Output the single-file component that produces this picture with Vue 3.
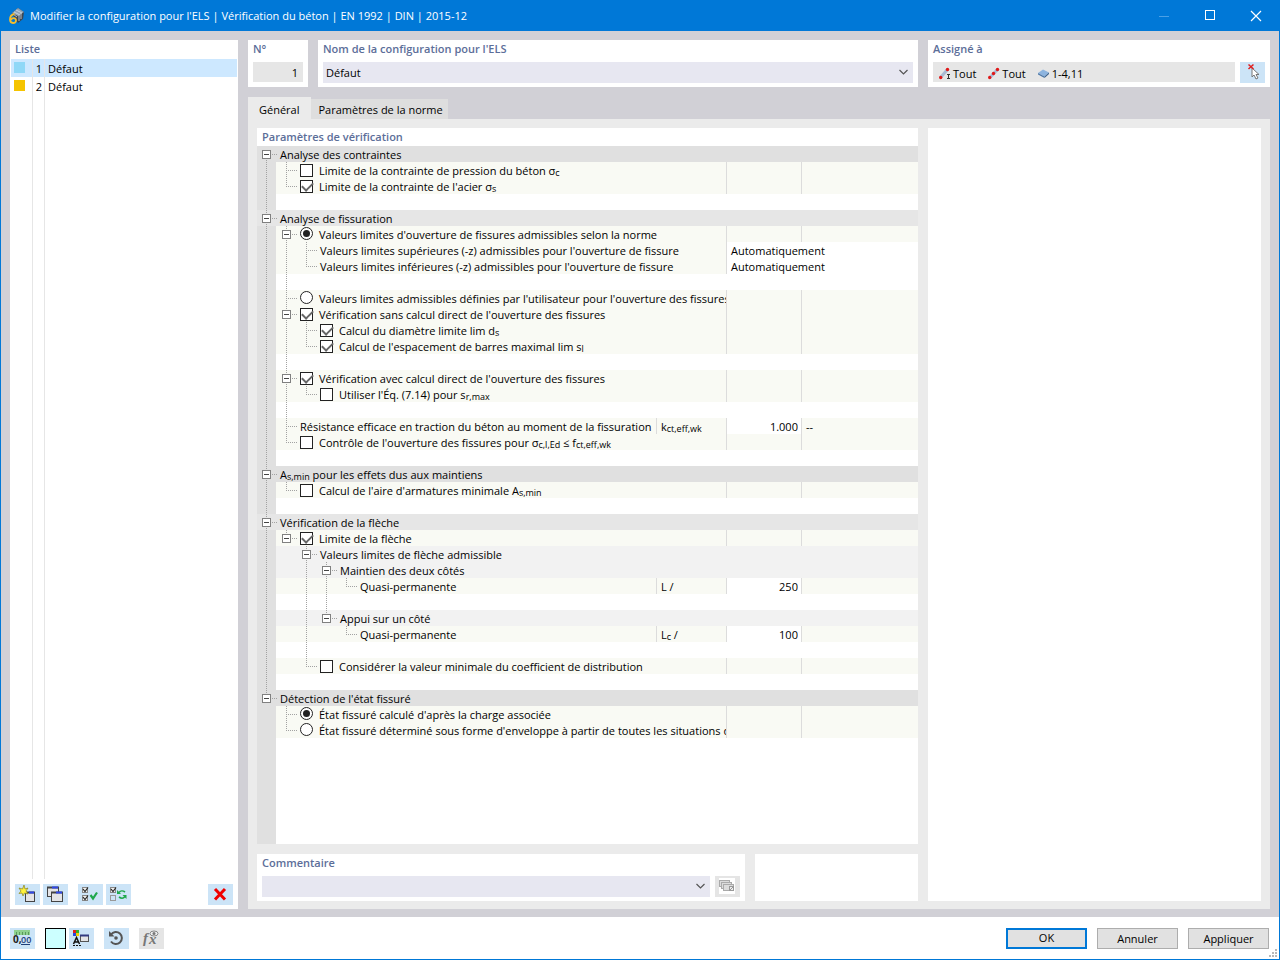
<script setup>
import { reactive, ref } from 'vue'

const configs = [
  { id: 1, name: 'Défaut', color: '#8fd8f7' },
  { id: 2, name: 'Défaut', color: '#f5c400' },
]
const selected = ref(1)
const configName = ref('Défaut')
const comment = ref('')
const tab = ref('general')

/*
 * Guide codes, one per tree level:
 *   .  empty        |  line          t  branch       l  last branch
 *   f  first box    b  middle box    e  last box
 */
const rows = reactive([
  { g: 'f', kind: 'head', text: 'Analyse des contraintes' },
  { g: '|t', check: false, text: 'Limite de la contrainte de pression du béton σ<sub>c</sub>' },
  { g: '|l', check: true, text: "Limite de la contrainte de l'acier σ<sub>s</sub>" },
  { g: '|', kind: 'blank' },
  { g: 'b', kind: 'head light', text: 'Analyse de fissuration' },
  { g: '|b', radio: 'limit', on: true, text: "Valeurs limites d'ouverture de fissures admissibles selon la norme" },
  { g: '||t', text: "Valeurs limites supérieures (-z) admissibles pour l'ouverture de fissure", wide: 'Automatiquement' },
  { g: '||l', text: "Valeurs limites inférieures (-z) admissibles pour l'ouverture de fissure", wide: 'Automatiquement' },
  { g: '||', kind: 'blank' },
  { g: '|t', radio: 'limit', text: "Valeurs limites admissibles définies par l'utilisateur pour l'ouverture des fissures" },
  { g: '|b', check: true, text: "Vérification sans calcul direct de l'ouverture des fissures" },
  { g: '||t', check: true, text: 'Calcul du diamètre limite lim d<sub>s</sub>' },
  { g: '||l', check: true, text: "Calcul de l'espacement de barres maximal lim s<sub>l</sub>" },
  { g: '||', kind: 'blank' },
  { g: '|b', check: true, text: "Vérification avec calcul direct de l'ouverture des fissures" },
  { g: '||l', check: false, text: "Utiliser l'Éq. (7.14) pour s<sub>r,max</sub>" },
  { g: '||', kind: 'blank' },
  { g: '|t', text: 'Résistance efficace en traction du béton au moment de la fissuration', symbol: 'k<sub>ct,eff,wk</sub>', value: '1.000', unit: '--' },
  { g: '|l', check: false, text: "Contrôle de l'ouverture des fissures pour σ<sub>c,l,Ed</sub> ≤ f<sub>ct,eff,wk</sub>" },
  { g: '|', kind: 'blank' },
  { g: 'b', kind: 'head', text: 'A<sub>s,min</sub> pour les effets dus aux maintiens' },
  { g: '|l', check: false, text: "Calcul de l'aire d'armatures minimale A<sub>s,min</sub>" },
  { g: '|', kind: 'blank' },
  { g: 'b', kind: 'head light', text: 'Vérification de la flèche' },
  { g: '|e', check: true, text: 'Limite de la flèche' },
  { g: '|.b', kind: 'sub', text: 'Valeurs limites de flèche admissible' },
  { g: '|.|b', kind: 'sub', text: 'Maintien des deux côtés' },
  { g: '|.||l', text: 'Quasi-permanente', symbol: 'L /', value: '250' },
  { g: '|.||', kind: 'blank' },
  { g: '|.|e', kind: 'sub', text: 'Appui sur un côté' },
  { g: '|.|.l', text: 'Quasi-permanente', symbol: 'L<sub>c</sub> /', value: '100' },
  { g: '|.|', kind: 'blank' },
  { g: '|.l', check: false, text: 'Considérer la valeur minimale du coefficient de distribution' },
  { g: '|', kind: 'blank' },
  { g: 'e', kind: 'head', text: "Détection de l'état fissuré" },
  { g: '.t', radio: 'state', on: true, text: "État fissuré calculé d'après la charge associée" },
  { g: '.l', radio: 'state', text: "État fissuré déterminé sous forme d'enveloppe à partir de toutes les situations de projet" },
])

const paths = {
  '|': 'M9.5 0V16',
  t: 'M9.5 0V16M11 8.5H20',
  l: 'M9.5 0V9M11 8.5H20',
  f: 'M9.5 14V16M15 8.5H20',
  b: 'M9.5 0V3M9.5 14V16M15 8.5H20',
  e: 'M9.5 0V3M15 8.5H20',
  '.': '',
}
const isBox = (c) => 'fbe'.includes(c)
const plain = (s) => (s || '').replace(/<[^>]+>/g, '')
</script>

<template>
  <div class="window">
    <header class="titlebar">
      <svg class="app-icon" width="16" height="16" viewBox="0 0 16 16">
        <path d="M3 5L9 0L15 4L14 11L9 15L5 9Z" fill="#3c4652" />
        <path d="M3 5L9 0L15 4L9 8Z" fill="#8fa3b5" />
        <path d="M5 4L11 7M7 2L13 5M4 6L8 9M12 5L12 11M10 7V13" stroke="#d3dce5" stroke-width="0.8" />
        <path d="M5.500 6C2 6.500 1 9 1 11.500C1 16 7 16 7 12.500C7 9.500 3 9.500 2 12" fill="none" stroke="#f4bd2e" stroke-width="1.800" />
      </svg>
      <h1>Modifier la configuration pour l'ELS | Vérification du béton | EN 1992 | DIN | 2015-12</h1>
      <button class="win" aria-label="Réduire" disabled>
        <svg width="12" height="12" viewBox="0 0 12 12"><path d="M1 6.500H11" stroke="#4aa0e6" /></svg>
      </button>
      <button class="win" aria-label="Agrandir">
        <svg width="12" height="12" viewBox="0 0 12 12"><rect x="1.500" y="0.500" width="9" height="9" fill="none" stroke="#fff" /></svg>
      </button>
      <button class="win" aria-label="Fermer">
        <svg width="12" height="12" viewBox="0 0 12 12"><path d="M1 1L11 11M11 1L1 11" stroke="#fff" stroke-width="1.200" /></svg>
      </button>
    </header>

    <div class="body">
      <aside class="panel list-panel">
        <h2>Liste</h2>
        <ul class="configs">
          <li v-for="c in configs" :key="c.id" :class="{ selected: c.id === selected }" @click="selected = c.id">
            <i class="swatch" :style="{ background: c.color }"></i>
            <span class="num">{{ c.id }}</span>
            <span>{{ c.name }}</span>
          </li>
        </ul>
        <div class="list-tools">
          <button class="tool" aria-label="Nouveau">
            <svg width="25" height="21" viewBox="0 0 25 21">
              <rect x="10.500" y="8.500" width="9" height="9" fill="#e4e4e6" stroke="#444" />
              <path d="M10 8.500H20" stroke="#444" stroke-width="2" />
              <path d="M14 8.500H19" stroke="#3048e8" stroke-width="2" />
              <path d="M9 1L10 5L13 4L11 7L13 10L9.500 9L8 12L7 9L4 9.500L6 7L4 4L7.500 5Z" fill="#fff23a" stroke="#8a8420" stroke-width="0.700" />
            </svg>
          </button>
          <button class="tool" aria-label="Copier">
            <svg width="25" height="21" viewBox="0 0 25 21">
              <rect x="4.500" y="3.500" width="11" height="9" fill="#e4e4e6" stroke="#444" />
              <path d="M4 3.500H16" stroke="#444" stroke-width="2" />
              <path d="M9 3.500H15" stroke="#3048e8" stroke-width="2" />
              <rect x="8.500" y="8.500" width="11" height="9" fill="#e4e4e6" stroke="#444" />
              <path d="M8 8.500H20" stroke="#444" stroke-width="2" />
              <path d="M13 8.500H19" stroke="#3048e8" stroke-width="2" />
            </svg>
          </button>
          <button class="tool spaced" aria-label="Tout sélectionner">
            <svg width="25" height="21" viewBox="0 0 25 21" fill="none">
              <rect x="4.500" y="3.500" width="5" height="5" fill="#eee" stroke="#888" />
              <rect x="4.500" y="11.500" width="5" height="5" fill="#eee" stroke="#888" />
              <path d="M5 5L7 7.500L10 3.500M5 13L7 15.500L10 11.500" stroke="#222" stroke-width="1.200" />
              <path d="M12.500 11L15 14.500L19 8.500" stroke="#1ea84c" stroke-width="2.200" />
            </svg>
          </button>
          <button class="tool" aria-label="Inverser la sélection">
            <svg width="25" height="21" viewBox="0 0 25 21" fill="none">
              <rect x="4.500" y="3.500" width="5" height="5" fill="#eee" stroke="#888" />
              <rect x="4.500" y="11.500" width="5" height="5" stroke="#999" />
              <path d="M5 5L7 7.500L10 3.500" stroke="#222" stroke-width="1.200" />
              <path d="M13 8.500C14.500 6.500 17 6.500 19 8M19 12.500C17.500 14.500 15 14.500 13 13" stroke="#1ea84c" stroke-width="1.600" />
              <path d="M11 6V10H15ZM20.500 15V11H16.500Z" fill="#1ea84c" />
            </svg>
          </button>
          <button class="tool end" aria-label="Supprimer">
            <svg width="25" height="21" viewBox="0 0 25 21"><path d="M7 5L17 15.500M17 5L7 15.500" stroke="#f00000" stroke-width="3" /></svg>
          </button>
        </div>
      </aside>

      <main class="content">
        <div class="top">
          <section class="panel field-panel number">
            <h2><label for="num">N°</label></h2>
            <input id="num" class="readonly" value="1" readonly />
          </section>
          <section class="panel field-panel name">
            <h2><label for="name">Nom de la configuration pour l'ELS</label></h2>
            <div class="combo">
              <select id="name" v-model="configName"><option>Défaut</option></select>
              <svg class="chevron" width="11" height="7" viewBox="0 0 11 7"><path d="M1.500 1L5.500 5L9.500 1" fill="none" stroke="#555" stroke-width="1.200" /></svg>
            </div>
          </section>
          <section class="panel field-panel assigned">
            <h2>Assigné à</h2>
            <div class="line">
              <div class="assign-box">
                <span class="assign">
                  <svg width="14" height="14" viewBox="0 0 14 14">
                    <path d="M1.500 10.500L8.500 2.500" stroke="#a9b9d2" stroke-width="3" />
                    <circle cx="1.700" cy="10.500" r="1.700" fill="#e01818" /><circle cx="8.500" cy="2.500" r="1.700" fill="#e01818" />
                    <path d="M8 7.500H11M9.500 7.500V11.500M8 11.500H11" stroke="#333" />
                  </svg>Tout
                </span>
                <span class="assign">
                  <svg width="14" height="14" viewBox="0 0 14 14">
                    <path d="M2 10.500L9.500 2.500" stroke="#a9b9d2" stroke-width="3" />
                    <circle cx="1.700" cy="10.500" r="1.700" fill="#e01818" /><circle cx="5.500" cy="6.500" r="1.700" fill="#e01818" /><circle cx="9.500" cy="2.500" r="1.700" fill="#e01818" />
                  </svg>Tout
                </span>
                <span class="assign">
                  <svg width="14" height="14" viewBox="0 0 14 14">
                    <path d="M0 6L5 2.500L11 5.500L6.500 9.500Z" fill="#8db4df" />
                    <path d="M0 6L6.500 9.500V11L0 7.500Z" fill="#4f79a8" /><path d="M6.500 9.500L11 5.500V7L6.500 11Z" fill="#3c618d" />
                  </svg>1-4,11
                </span>
              </div>
              <button class="tool" aria-label="Sélectionner dans le graphique">
                <svg width="25" height="21" viewBox="0 0 25 21">
                  <path d="M12 6L12 15L14 13L16 17L18 16L16 12.500H19Z" fill="#fff" stroke="#777" />
                  <path d="M8.500 2.500L13.500 7M13.500 2.500L8.500 7" stroke="#e02020" stroke-width="1.500" />
                </svg>
              </button>
            </div>
          </section>
        </div>

        <div class="tabs" role="tablist">
          <button role="tab" :class="{ active: tab === 'general' }" :aria-selected="tab === 'general'" @click="tab = 'general'">Général</button>
          <button role="tab" :class="{ active: tab === 'norm' }" :aria-selected="tab === 'norm'" @click="tab = 'norm'">Paramètres de la norme</button>
        </div>

        <div class="page">
          <div class="left">
            <section class="panel params">
              <h2>Paramètres de vérification</h2>
              <div class="tree">
                <table>
                  <colgroup><col /><col class="c-symbol" /><col class="c-value" /><col class="c-unit" /></colgroup>
                  <tbody>
                    <tr v-for="(r, i) in rows" :key="i" :class="r.kind || 'item'">
                      <td class="name-cell" :colspan="r.kind ? 4 : r.symbol ? 1 : 2">
                        <div class="node">
                          <svg v-for="(c, k) in r.g" :key="k" class="guide" width="20" height="16" viewBox="0 0 20 16">
                            <path :d="paths[c]" fill="none" stroke="#a2a2a2" stroke-dasharray="1 1" />
                            <template v-if="isBox(c)">
                              <rect x="5.500" y="4.500" width="8" height="8" fill="#fff" stroke="#808080" />
                              <path d="M7 8.500H12" stroke="#444" />
                            </template>
                          </svg>
                          <label v-if="r.check !== undefined" class="option">
                            <input type="checkbox" v-model="r.check" /><span v-html="r.text"></span>
                          </label>
                          <label v-else-if="r.radio" class="option">
                            <input type="radio" :name="r.radio" :checked="r.on" /><span v-html="r.text"></span>
                          </label>
                          <span v-else class="caption" v-html="r.text"></span>
                        </div>
                      </td>
                      <template v-if="!r.kind">
                        <td v-if="r.symbol" class="cell" v-html="r.symbol"></td>
                        <td v-if="r.wide" class="cell edit" colspan="2">{{ r.wide }}</td>
                        <template v-else>
                          <td class="cell" :class="{ edit: r.value }">
                            <input v-if="r.value" v-model="r.value" class="value" :aria-label="plain(r.symbol)" />
                          </td>
                          <td class="cell">{{ r.unit }}</td>
                        </template>
                      </template>
                    </tr>
                  </tbody>
                </table>
              </div>
            </section>
            <div class="bottom">
              <section class="panel field-panel comment">
                <h2><label for="comment">Commentaire</label></h2>
                <div class="line">
                  <div class="combo">
                    <select id="comment" v-model="comment"><option value=""></option></select>
                    <svg class="chevron" width="11" height="7" viewBox="0 0 11 7"><path d="M1.500 1L5.500 5L9.500 1" fill="none" stroke="#555" stroke-width="1.200" /></svg>
                  </div>
                  <button class="tool off" aria-label="Bibliothèque de commentaires" disabled>
                    <svg width="25" height="21" viewBox="0 0 25 21">
                      <rect x="4" y="2" width="16" height="16" fill="#fff" />
                      <g fill="#dcdcdc" stroke="#aaa"><rect x="4.500" y="4.500" width="10" height="6" /><rect x="6.500" y="6.500" width="10" height="6" /><rect x="8.500" y="8.500" width="10" height="6" /></g>
                      <rect x="14.500" y="10.500" width="4" height="4" fill="#eee" stroke="#999" /><path d="M15 14L18 11" stroke="#999" />
                    </svg>
                  </button>
                </div>
              </section>
              <section class="panel extra"></section>
            </div>
          </div>
          <section class="panel preview"></section>
        </div>
      </main>
    </div>

    <footer class="footer">
      <button class="tool" aria-label="Unités et décimales">
        <svg width="25" height="21" viewBox="0 0 25 21">
          <rect x="4" y="2" width="16" height="5" fill="#8fd18f" />
          <path d="M6.500 4V7M9.500 4V7M12.500 4V7M15.500 4V7M18.500 4V7" stroke="#5a9a5a" />
          <text x="3" y="15" font-size="10" font-weight="700" fill="#222">0,</text>
          <text x="11" y="15" font-size="9" font-weight="600" fill="#1f3f7a">00</text>
          <path d="M11 16.500H20" stroke="#1f3f7a" />
        </svg>
      </button>
      <button class="color" aria-label="Couleur"></button>
      <button class="tool" aria-label="Affichage">
        <svg width="25" height="21" viewBox="0 0 25 21">
          <rect x="4" y="2" width="3" height="3" fill="#e02020" /><rect x="7" y="2" width="3" height="3" fill="#2fb02f" />
          <rect x="4" y="5" width="3" height="3" fill="#2848e0" /><rect x="7" y="5" width="3" height="3" fill="#f0d000" />
          <path d="M4.500 16L7.500 9.500L10.500 16M5.500 14H9.500" fill="none" stroke="#111" stroke-width="1.500" />
          <path d="M4 17.500H12" stroke="#111" stroke-dasharray="2 1" />
          <rect x="11.500" y="7.500" width="8" height="6" fill="#e4e4e6" stroke="#555" />
          <path d="M11 7.500H20" stroke="#333a80" stroke-width="2" />
        </svg>
      </button>
      <button class="tool gap" aria-label="Rétablir">
        <svg width="25" height="21" viewBox="0 0 25 21" fill="none">
          <path d="M7 6.500A6 6 0 1 1 7 13.500" stroke="#555" stroke-width="2" />
          <path d="M5 3V8.500H10.500Z" fill="#555" /><circle cx="12" cy="10" r="1.800" fill="#555" />
        </svg>
      </button>
      <button class="tool off gap" aria-label="Formule" disabled>
        <svg width="25" height="21" viewBox="0 0 25 21">
          <text x="4" y="15" class="fx">f</text><text x="10" y="16" class="fx">x</text>
          <ellipse cx="15" cy="5.500" rx="4" ry="2.500" fill="#eee" stroke="#888" /><circle cx="15" cy="5.500" r="1.500" fill="#777" />
        </svg>
      </button>
      <div class="actions">
        <button class="ok">OK</button>
        <button>Annuler</button>
        <button>Appliquer</button>
      </div>
      <svg class="grip" width="8" height="8" viewBox="0 0 8 8" fill="#b8b8b8">
        <path d="M6 0h2v2h-2zM3 3h2v2h-2zM6 3h2v2h-2zM0 6h2v2h-2zM3 6h2v2h-2zM6 6h2v2h-2z" />
      </svg>
    </footer>
  </div>
</template>

<style>
body {
  margin: 0;
}
</style>

<style scoped>
.window {
  --label: #5c6e99;
  display: flex;
  flex-direction: column;
  box-sizing: border-box;
  min-height: 100vh;
  border: 1px solid #0078d7;
  background: #d1d0d6;
  color: #000;
  font: 11px/16px "Open Sans", "Noto Sans", sans-serif;
}
.window * {
  box-sizing: border-box;
}
button,
input,
select {
  margin: 0;
  padding: 0;
  border: 0;
  border-radius: 0;
  color: inherit;
  font: inherit;
}
svg {
  display: block;
  flex: none;
}
h1,
h2 {
  margin: 0;
}

.titlebar {
  display: flex;
  align-items: center;
  height: 30px;
  padding-left: 8px;
  background: #0078d7;
  color: #fff;
}
h1 {
  flex: 1;
  margin-left: 5px;
  font-size: 11px;
  font-weight: 400;
}
.win {
  display: flex;
  align-items: center;
  justify-content: center;
  width: 46px;
  height: 30px;
  background: none;
}

.body {
  flex: 1;
  display: flex;
  gap: 10px;
  padding: 9px 9px 8px;
}
.panel {
  background: #fff;
}
h2 {
  color: var(--label);
  font-size: 11px;
  line-height: 18px;
  font-weight: 600;
  padding-left: 5px;
}
.list-panel {
  display: flex;
  flex-direction: column;
  width: 228px;
}
.configs {
  --rules: linear-gradient(#e6e6e6, #e6e6e6) 21px 0 / 1px 100% no-repeat,
    linear-gradient(#e6e6e6, #e6e6e6) 33px 0 / 1px 100% no-repeat;
  flex: 1;
  margin: 1px 1px 5px;
  padding: 0;
  list-style: none;
  background: var(--rules);
}
.configs li {
  display: grid;
  grid-template-columns: 21px 10px 1fr;
  height: 18px;
  padding-top: 2px;
}
.configs li.selected {
  background: var(--rules), #cde8ff;
}
.swatch {
  width: 11px;
  height: 11px;
  margin: 1px 0 0 3px;
}
.num {
  text-align: right;
}
.num + span {
  padding-left: 6px;
}
.list-tools {
  display: flex;
  gap: 3px;
  padding: 0 5px 4px;
}
.tool {
  width: 25px;
  height: 21px;
  flex: none;
  background: #cce4f7;
}
.tool.off {
  background: #e5e5e5;
}
.tool.spaced {
  margin-left: 7px;
}
.tool.end {
  margin-left: auto;
}

.content {
  flex: 1;
  display: flex;
  flex-direction: column;
  min-width: 0;
}
.top {
  display: flex;
  gap: 10px;
}
.field-panel {
  height: 47px;
  padding: 0 5px;
}
.field-panel h2 {
  padding: 0 0 4px;
}
.number {
  width: 60px;
}
.name {
  flex: 1;
}
.assigned {
  width: 342px;
}
.readonly {
  width: 100%;
  height: 20px;
  padding: 1px 5px 0 0;
  background: #e6e6e6;
  text-align: right;
}
.combo {
  position: relative;
  flex: 1;
}
.combo select {
  display: block;
  width: 100%;
  height: 21px;
  padding-left: 3px;
  appearance: none;
  background: #e7e7f1;
}
.chevron {
  position: absolute;
  right: 4px;
  top: 7px;
  pointer-events: none;
}
.line {
  display: flex;
  gap: 5px;
}
.assign-box {
  flex: 1;
  display: flex;
  align-items: center;
  gap: 12px;
  height: 20px;
  padding: 3px 6px 0;
  background: #e6e6e6;
}
.assign {
  display: flex;
  align-items: center;
}

.tabs {
  display: flex;
  align-items: flex-end;
  height: 22px;
  margin-top: 10px;
}
.tabs button {
  height: 20px;
  padding: 2px 5px 0 7px;
  background: #dedede;
}
.tabs .active {
  height: 22px;
  padding: 4px 12px 0 11px;
  background: #ebebeb;
}
.page {
  flex: 1;
  display: flex;
  gap: 10px;
  padding: 9px 9px 8px;
  background: #ebebeb;
}
.left {
  flex: 661;
  display: flex;
  flex-direction: column;
  gap: 10px;
  min-width: 0;
}
.preview {
  flex: 333;
}
.params {
  flex: 1;
  display: flex;
  flex-direction: column;
}
.tree {
  flex: 1;
  background: linear-gradient(to right, #e0e0e0 19px, #fff 19px);
}
table {
  width: 100%;
  table-layout: fixed;
  border-collapse: collapse;
}
.c-symbol {
  width: 70px;
}
.c-value {
  width: 75px;
}
.c-unit {
  width: 117px;
}
td {
  height: 16px;
  padding: 0;
  white-space: nowrap;
}
.item {
  background: #f9faf4;
}
.item .name-cell,
.sub .name-cell {
  background: linear-gradient(to right, #e0e0e0 19px, transparent 19px);
}
.head {
  background: #e0e0e0;
}
.head.light {
  background: #e6e6e6;
}
.sub {
  background: #f2f2f2;
}
.node {
  display: flex;
  height: 16px;
  overflow-x: clip;
}
.caption {
  padding: 2px 0 0 3px;
  line-height: 14px;
}
.option {
  display: flex;
  gap: 6px;
  padding-left: 3px;
}
.option span {
  padding-top: 2px;
  line-height: 14px;
}
.option input {
  position: relative;
  flex: none;
  width: 13px;
  height: 13px;
  margin-top: 2px;
  appearance: none;
  border: 1px solid #222;
  background: #fff;
}
.option input[type="radio"] {
  margin-top: 1px;
  border-radius: 50%;
}
.option input[type="checkbox"]:checked::before {
  content: "";
  position: absolute;
  left: 3px;
  top: -1px;
  width: 5px;
  height: 9px;
  border: solid #666;
  border-width: 0 2px 2px 0;
  transform: rotate(45deg);
}
.option input[type="radio"]:checked::before {
  content: "";
  position: absolute;
  inset: 2px;
  border-radius: 50%;
  background: #222;
}
.cell {
  box-shadow: inset 1px 0 #dcdcdc;
  padding: 2px 0 0 5px;
  line-height: 14px;
}
.edit {
  background: #fff;
}
.value {
  display: block;
  width: 100%;
  height: 14px;
  padding-right: 3px;
  background: transparent;
  line-height: 14px;
  text-align: right;
}
:deep(sub) {
  font-size: 9px;
  line-height: 0;
  vertical-align: -1px;
}
.bottom {
  display: flex;
  gap: 10px;
}
.comment {
  flex: 1;
}
.extra {
  width: 163px;
}

.footer {
  position: relative;
  display: flex;
  align-items: center;
  height: 42px;
  padding: 0 10px 0 9px;
  background: #fff;
}
.color {
  width: 21px;
  height: 21px;
  margin: 0 3px 0 10px;
  border: 1px solid #000;
  background: #ccffff;
}
.tool.gap {
  margin-left: 10px;
}
.fx {
  fill: #777;
  font: italic 700 15px "Liberation Serif", serif;
}
.actions {
  display: flex;
  gap: 10px;
  margin-left: auto;
}
.actions button {
  width: 81px;
  height: 21px;
  padding-top: 1px;
  border: 1px solid #adadad;
  background: #e1e1e1;
}
.actions .ok {
  padding: 0;
  border: 2px solid #0078d7;
}
.grip {
  position: absolute;
  right: 2px;
  bottom: 2px;
}
</style>
